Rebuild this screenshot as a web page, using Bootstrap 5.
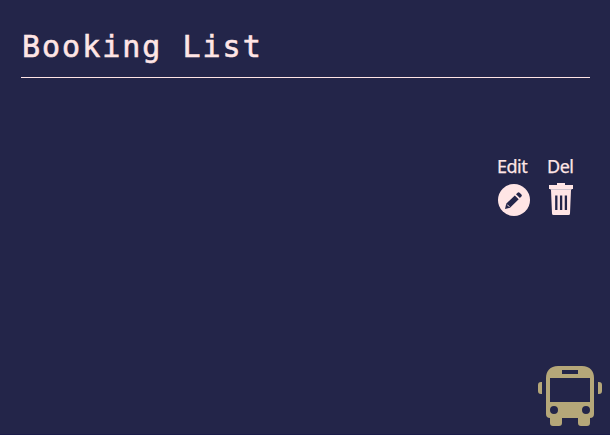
<!DOCTYPE html>
<html lang="en">
<head>
<meta charset="utf-8">
<meta name="viewport" content="width=device-width, initial-scale=1">
<title>Booking List</title>
<link href="https://cdn.jsdelivr.net/npm/bootstrap@5.3.0/dist/css/bootstrap.min.css" rel="stylesheet">
<style>
  body { background: #232549; color: #ffe5e5; font-family: "Noto Sans", sans-serif; }
  .page { height: 435px; padding: 29px 20px 0 21px; border-bottom: 1px solid #1b1c49; }
  .page-title { font: 400 30px/36px "DejaVu Sans Mono", monospace; letter-spacing: 2px; -webkit-text-stroke: .6px #ffe5e5; padding: 0 0 12px 1px; border-bottom: 1px solid #ffe5e5; }
  .actions { margin-top: 77px; padding-right: 17px; gap: 17px; }
  .action { color: inherit; font-size: 18px; line-height: 22px; letter-spacing: -.5px; text-decoration: none; -webkit-text-stroke: .25px #ffe5e5; }
  .action svg { margin-top: 6px; }
  .action-edit { width: 33px; }
  .action-del { width: 26px; }
  .bus { margin-right: -12px; margin-bottom: 7px; }
</style>
</head>
<body>
<main class="page d-flex flex-column overflow-hidden">
  <h1 class="page-title mb-0">Booking List</h1>
  <div class="actions d-flex justify-content-end">
    <a class="action action-edit d-flex flex-column" href="#"><span>Edit</span>
      <svg width="33" height="33" viewBox="0 0 33 33" aria-hidden="true">
        <circle cx="17" cy="17" r="16" fill="#ffe5e5"/>
        <path d="M8 26l1.200-5.200L17.800 12.400l3.900 3.900L13 24.800zM19 11.300l1.600-1.600q1-.8 2 .1l1.800 1.800q.9 1 0 2l-1.500 1.500z" fill="#232549"/>
        <path d="M10.200 21.600l2.200 2.200" stroke="#ffe5e5" stroke-width="1"/>
      </svg>
    </a>
    <a class="action action-del d-flex flex-column" href="#"><span>Del</span>
      <svg width="26" height="33" viewBox="-1 0 26 33" aria-hidden="true">
        <path d="M1 2h8V0h8v2h8v4H1z" fill="#ffe5e5"/>
        <path d="M3 7h20l-1 23.500q0 1.500-1.500 1.500h-15Q4 32 4 30.500z" fill="#ffe5e5"/>
        <path d="M2.500 6.500h21" stroke="#d0c2cb"/>
        <path d="M8.300 12.500v14.500M13.100 12.500v14.500M17.900 12.500v14.500" stroke="#232549" stroke-width="2.300"/>
      </svg>
    </a>
  </div>
  <svg class="bus mt-auto align-self-end" width="64" height="62" viewBox="0 0 64 62" role="img" aria-label="Bus">
    <path fill="#b5a779" fill-rule="evenodd" d="M20 1h24c8 0 12 5 12 12v36q0 4-4 4v5q0 3-3 3h-6q-3 0-3-3v-5H24v5q0 3-3 3h-6q-3 0-3-3v-5q-4 0-4-4V13C8 6 12 1 20 1zM24 5v4h16V5zM12 13v24h40V13zM4 17v12H3q-3 0-3-3v-6q0-3 3-3zM60 17h1q3 0 3 3v6q0 3-3 3h-1zM16 41a4 4 0 1 0 0 8a4 4 0 1 0 0-8M48 41a4 4 0 1 0 0 8a4 4 0 1 0 0-8"/>
  </svg>
</main>
<script src="https://cdn.jsdelivr.net/npm/bootstrap@5.3.0/dist/js/bootstrap.bundle.min.js"></script>
</body>
</html>
